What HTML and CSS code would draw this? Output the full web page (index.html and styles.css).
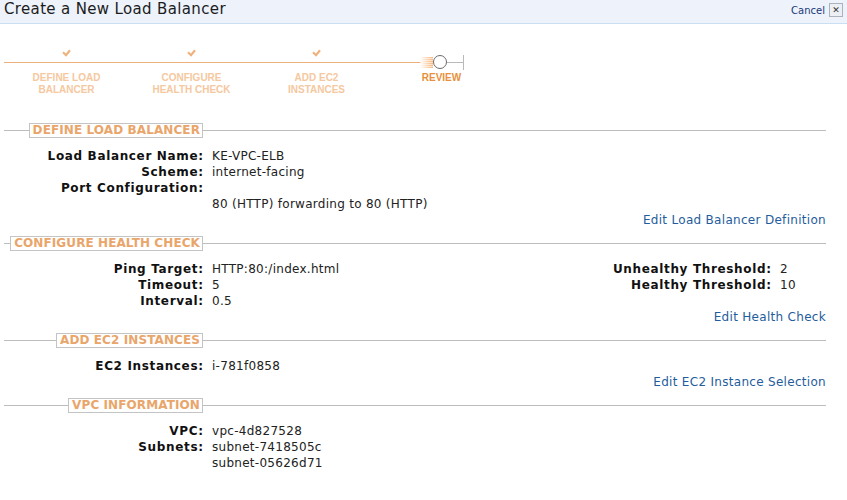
FILE: index.html
```html
<!DOCTYPE html>
<html>
<head>
<meta charset="utf-8">
<link rel="stylesheet" href="styles.css">
</head>
<body>
<div class="header">
  <h1 class="title">Create a New Load Balancer</h1>
  <div class="cancel"><span class="cancel-text">Cancel</span><span class="close">&#x2715;</span></div>
</div>

<div class="wizard">
  <div class="step done">
    <div class="marker"><svg class="check" width="9" height="8" viewBox="0 0 9 8"><path d="M1 3.2 L4 6.2 L8 1.2" fill="none" stroke="#f0b27c" stroke-width="2.2"/></svg></div>
    <div class="step-label">DEFINE LOAD<br>BALANCER</div>
  </div>
  <div class="step done">
    <div class="marker"><svg class="check" width="9" height="8" viewBox="0 0 9 8"><path d="M1 3.2 L4 6.2 L8 1.2" fill="none" stroke="#f0b27c" stroke-width="2.2"/></svg></div>
    <div class="step-label">CONFIGURE<br>HEALTH CHECK</div>
  </div>
  <div class="step done">
    <div class="marker"><svg class="check" width="9" height="8" viewBox="0 0 9 8"><path d="M1 3.2 L4 6.2 L8 1.2" fill="none" stroke="#f0b27c" stroke-width="2.2"/></svg></div>
    <div class="step-label">ADD EC2<br>INSTANCES</div>
  </div>
  <div class="step current">
    <div class="marker current-marker">
      <span class="glow"></span><span class="circle"></span><span class="tail"></span><span class="tick"></span>
    </div>
    <div class="step-label">REVIEW</div>
  </div>
</div>

<div class="content">
  <div class="section">
    <div class="sec-head"><div class="lead"><span class="legend">DEFINE LOAD BALANCER</span></div><div class="rule"></div></div>
    <div class="fields">
      <div class="label">Load Balancer Name:</div><div class="value">KE-VPC-ELB</div>
      <div class="label">Scheme:</div><div class="value">internet-facing</div>
      <div class="label">Port Configuration:</div><div class="value"></div>
      <div class="label"></div><div class="value">80 (HTTP) forwarding to 80 (HTTP)</div>
    </div>
    <div class="edit"><a>Edit Load Balancer Definition</a></div>
  </div>

  <div class="section">
    <div class="sec-head"><div class="lead"><span class="legend">CONFIGURE HEALTH CHECK</span></div><div class="rule"></div></div>
    <div class="split">
      <div class="fields">
        <div class="label">Ping Target:</div><div class="value">HTTP:80:/index.html</div>
        <div class="label">Timeout:</div><div class="value">5</div>
        <div class="label">Interval:</div><div class="value">0.5</div>
      </div>
      <div class="fields right">
        <div class="label">Unhealthy Threshold:</div><div class="value">2</div>
        <div class="label">Healthy Threshold:</div><div class="value">10</div>
      </div>
    </div>
    <div class="edit"><a>Edit Health Check</a></div>
  </div>

  <div class="section">
    <div class="sec-head"><div class="lead"><span class="legend">ADD EC2 INSTANCES</span></div><div class="rule"></div></div>
    <div class="fields">
      <div class="label">EC2 Instances:</div><div class="value">i-781f0858</div>
    </div>
    <div class="edit"><a>Edit EC2 Instance Selection</a></div>
  </div>

  <div class="section">
    <div class="sec-head"><div class="lead"><span class="legend">VPC INFORMATION</span></div><div class="rule"></div></div>
    <div class="fields">
      <div class="label">VPC:</div><div class="value">vpc-4d827528</div>
      <div class="label">Subnets:</div><div class="value">subnet-7418505c</div>
      <div class="label"></div><div class="value">subnet-05626d71</div>
    </div>
  </div>
</div>
</body>
</html>
```

FILE: styles.css
```css
html, body {
  margin: 0;
  padding: 0;
  background: #ffffff;
}
body {
  font-family: "DejaVu Sans", Verdana, sans-serif;
  font-size: 12px;
  color: #1a1a1a;
  width: 847px;
}

/* header */
.header {
  height: 23px;
  background: #edf2fb;
  border-bottom: 1px solid #cadff4;
  display: flex;
  justify-content: space-between;
  align-items: flex-start;
  padding: 0 4px 0 4px;
}
.title {
  margin: 0;
  font-size: 15px;
  font-weight: normal;
  line-height: 18px;
  color: #1c1c1c;
  letter-spacing: 0.35px;
}
.cancel {
  display: flex;
  align-items: center;
  gap: 4px;
  margin-top: 3px;
}
.cancel-text {
  font-size: 10px;
  color: #1b3a78;
  line-height: 13px;
}
.close {
  width: 12px;
  height: 12px;
  border: 1px solid #a9b2bd;
  background: #eceff3;
  font-size: 9px;
  line-height: 12px;
  text-align: center;
  color: #333;
  font-weight: bold;
}

/* wizard */
.wizard {
  display: flex;
  padding: 22px 0 27px 4px;
  background: linear-gradient(#ecb07e, #ecb07e) no-repeat 4px 38px / 417px 1px;
}
.step {
  width: 125px;
  display: flex;
  flex-direction: column;
  align-items: center;
}
.marker {
  height: 26px;
  width: 100%;
  display: flex;
  justify-content: center;
  align-items: flex-start;
}
.check {
  display: block;
  margin-top: 3px;
}
.step-label {
  font-family: "Liberation Sans", Arial, sans-serif;
  font-weight: bold;
  font-size: 10px;
  line-height: 12px;
  text-align: center;
  color: #f5c8a0;
}
.current .step-label {
  color: #e8903c;
}
.current-marker {
  justify-content: flex-start;
  align-items: center;
  padding-left: 41px;
  box-sizing: border-box;
  height: 16px;
  margin-top: 8px;
  margin-bottom: 2px;
}
.glow {
  width: 13px;
  height: 11px;
  background:
    repeating-linear-gradient(180deg, rgba(255,255,255,0) 0 1px, rgba(255,255,255,0.55) 1px 2px),
    linear-gradient(90deg, rgba(245,170,100,0) 0%, rgba(245,170,100,0.85) 100%);
}
.circle {
  width: 12px;
  height: 12px;
  border: 1.5px solid #6a6a6a;
  border-radius: 50%;
  background: #fff;
  flex: none;
}
.tail {
  width: 16px;
  height: 1px;
  background: #b9b9b9;
}
.tick {
  width: 1px;
  height: 15px;
  background: #b9b9b9;
}

/* content */
.content {
  padding: 0 21px 0 4px;
}
.section {
  margin-bottom: 8px;
}
.sec-head {
  display: flex;
  align-items: center;
  height: 15px;
}
.lead {
  width: 199px;
  display: flex;
  align-items: center;
  flex: none;
}
.lead::before {
  content: "";
  flex: 1;
  height: 1px;
  background: #bdbdbd;
}
.rule {
  flex: 1;
  height: 1px;
  background: #bdbdbd;
}
.legend {
  border: 1px solid #c4c4c4;
  padding: 0 2px 0 3px;
  font-weight: bold;
  font-size: 12px;
  line-height: 13px;
  color: #e9a56a;
  letter-spacing: 0.1px;
}
.fields {
  display: grid;
  grid-template-columns: 199px auto;
  column-gap: 9px;
  line-height: 16px;
  margin-top: 10px;
}
.label {
  text-align: right;
  font-weight: bold;
  color: #111;
  letter-spacing: 0.65px;
  margin-right: -0.65px;
}
.value {
  color: #222;
  letter-spacing: 0.28px;
}
.split {
  display: flex;
  justify-content: space-between;
  align-items: flex-start;
}
.fields.right {
  grid-template-columns: auto 46px;
}
.edit {
  text-align: right;
  line-height: 16px;
  letter-spacing: 0.3px;
}
.edit a {
  color: #1f5d9c;
  text-decoration: none;
}
```
